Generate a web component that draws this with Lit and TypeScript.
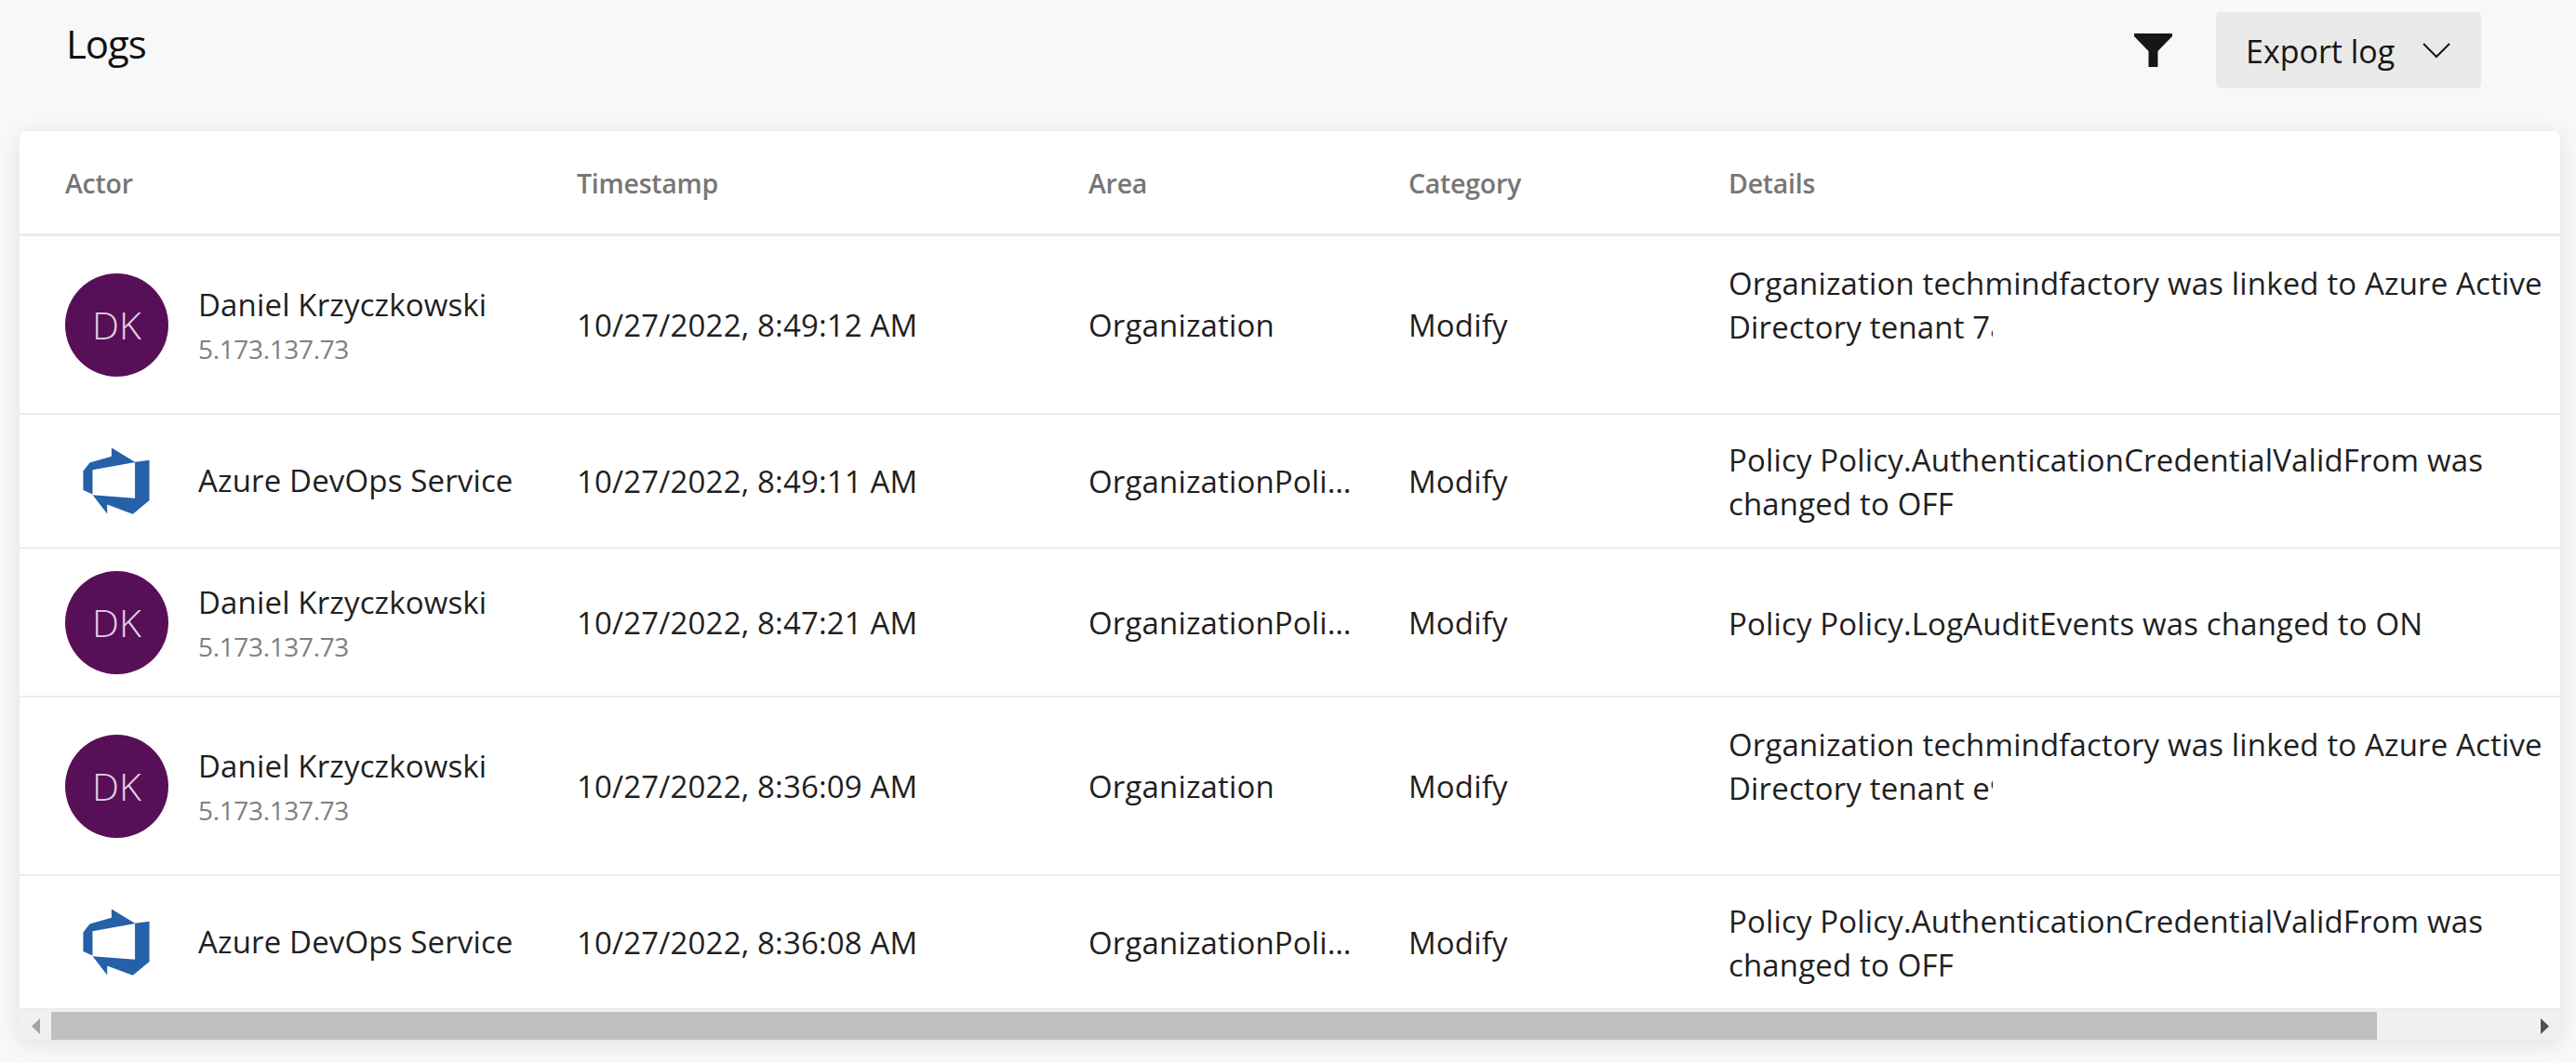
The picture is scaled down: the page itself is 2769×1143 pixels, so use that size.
import { LitElement, html, css, svg } from "lit";
import { customElement } from "lit/decorators.js";

interface Row {
  kind: "user" | "service";
  time: string;
  area: string;
  size: "tall" | "short" | "mid";
  details: string[];
  clipped?: string;
}
const rows: Row[] = [
  { kind: "user", time: "10/27/2022, 8:49:12 AM", area: "Organization", size: "tall",
    details: ["Organization techmindfactory was linked to Azure Active"], clipped: "Directory tenant 7a0b5d3c" },
  { kind: "service", time: "10/27/2022, 8:49:11 AM", area: "OrganizationPolicy", size: "short",
    details: ["Policy Policy.AuthenticationCredentialValidFrom was", "changed to OFF"] },
  { kind: "user", time: "10/27/2022, 8:47:21 AM", area: "OrganizationPolicy", size: "mid",
    details: ["Policy Policy.LogAuditEvents was changed to ON"] },
  { kind: "user", time: "10/27/2022, 8:36:09 AM", area: "Organization", size: "tall",
    details: ["Organization techmindfactory was linked to Azure Active"], clipped: "Directory tenant e9f41b7d" },
  { kind: "service", time: "10/27/2022, 8:36:08 AM", area: "OrganizationPolicy", size: "short",
    details: ["Policy Policy.AuthenticationCredentialValidFrom was", "changed to OFF"] },
];

const devops = svg`<path fill="#2560a8" d="M17 4v9.74l-4 3.28-6.2-2.26V17l-3.51-4.59 10.23.8V4.44zm-3.41.49L7.85 1v2.07L2.58 4.62 1 6.65v4.61l2.26 1V6.34z"/>`;

@customElement("app-root")
export class AppRoot extends LitElement {
  static styles = css`
    :host {
      display: block;
      height: 1143px;
      background: #f8f8f8;
      font-family: "Open Sans", "Noto Sans", sans-serif;
      color: #1f1f1f;
      overflow: hidden;
    }
    .top {
      display: flex;
      align-items: flex-start;
      height: 141px;
      padding: 13px 102px 0 71px;
      box-sizing: border-box;
    }
    .title {
      font-size: 42px;
      line-height: 68px;
      letter-spacing: -1.1px;
      color: #111;
      margin-top: 0;
    }
    .spacer { flex: 1; }
    .filter {
      width: 41px;
      height: 36px;
      margin: 23px 47px 0 0;
      display: block;
    }
    .export {
      display: flex;
      align-items: center;
      width: 285px;
      height: 82px;
      box-sizing: border-box;
      padding: 0 33px 0 32px;
      background: #e9e9e9;
      border-radius: 5px;
      font-size: 34px;
      font-weight: 500;
      letter-spacing: 0;
      color: #161616;
      justify-content: space-between;
    }
    .export span { padding-top: 2px; }
    .export svg { width: 30px; height: 18px; display: block; }
    .card {
      margin: 0 17px 0 21px;
      background: #fff;
      border-radius: 8px;
      box-shadow: 0 4px 22px rgba(0, 0, 0, 0.1);
      overflow: hidden;
      height: 977px;
      display: flex;
      flex-direction: column;
    }
    .row {
      display: grid;
      grid-template-columns: 550px 550px 344px 344px 960px;
      padding-left: 49px;
      align-items: center;
      box-sizing: border-box;
      border-bottom: 2px solid #ececec;
      font-size: 33px;
      letter-spacing: 0.15px;
      flex: none;
    }
    .row:last-of-type { border-bottom: none; }
    .head {
      height: 113px;
      border-bottom: 3px solid #eaeaea;
      font-size: 28.500px;
      font-weight: 600;
      letter-spacing: -0.25px;
      color: #767676;
      padding-top: 2px;
    }
    .tall { height: 192px; }
    .short { height: 144px; }
    .mid { height: 160px; }
    .actor { display: flex; align-items: center; gap: 33px; }
    .avatar {
      width: 111px;
      height: 111px;
      margin-right: -1px;
      border-radius: 50%;
      background: #570f57;
      color: #e3d3e3;
      font-size: 41px;
      font-weight: 300;
      letter-spacing: 0;
      display: flex;
      align-items: center;
      justify-content: center;
      flex: none;
    }
    .logo { width: 110px; height: 110px; display: flex; align-items: center; justify-content: center; flex: none; }
    .logo svg { width: 80px; height: 80px; display: block; }
    .who { display: flex; flex-direction: column; }
    .name { line-height: 47px; white-space: nowrap; margin-top: 2.500px; }
    .name:only-child { margin-top: -1px; }
    .ip { font-size: 28px; line-height: 44px; letter-spacing: -0.35px; color: #808080; margin-top: 1.500px; }
    .cell { padding-top: 1px; }
    .area {
      overflow: hidden;
      text-overflow: ellipsis;
      white-space: nowrap;
      min-width: 0;
      padding-top: 1px;
      padding-right: 60px;
    }
    .details { line-height: 47px; padding-top: 2px; }
    .line { white-space: nowrap; }
    .clip { white-space: nowrap; overflow: hidden; width: 284px; margin-bottom: 44px; }
    .scroll {
      flex: none;
      height: 34px;
      background: #f0f0f0;
      display: flex;
      align-items: center;
      margin-top: auto;
    }
    .arrow { width: 34px; flex: none; display: flex; justify-content: center; }
    .arrow svg { width: 9px; height: 17px; display: block; }
    .thumb { width: 2500px; height: 30px; background: #c0c0c0; flex: none; }
    .gap { flex: 1; }
  `;

  private actor(r: Row) {
    if (r.kind === "service") {
      return html`<div class="actor">
        <div class="logo"><svg viewBox="0 0 18 18">${devops}</svg></div>
        <div class="who"><div class="name">Azure DevOps Service</div></div>
      </div>`;
    }
    return html`<div class="actor">
      <div class="avatar">DK</div>
      <div class="who">
        <div class="name">Daniel Krzyczkowski</div>
        <div class="ip">5.173.137.73</div>
      </div>
    </div>`;
  }

  render() {
    return html`
      <div class="top">
        <div class="title">Logs</div>
        <div class="spacer"></div>
        <svg class="filter" viewBox="0 0 41 36"><path fill="#161616" d="M0 0h41v3L25.500 19v17h-10V19L0 3z"/></svg>
        <div class="export">
          <span>Export log</span>
          <svg viewBox="0 0 30 18"><path fill="none" stroke="#161616" stroke-width="2" d="M1 2l14 14L29 2"/></svg>
        </div>
      </div>
      <div class="card">
        <div class="row head">
          <div>Actor</div><div>Timestamp</div><div>Area</div><div>Category</div><div>Details</div>
        </div>
        ${rows.map(
          (r) => html`<div class="row ${r.size}">
            ${this.actor(r)}
            <div class="cell">${r.time}</div>
            <div class="area">${r.area}</div>
            <div class="cell">Modify</div>
            <div class="details">
              ${r.details.map((d) => html`<div class="line">${d}</div>`)}
              ${r.clipped ? html`<div class="clip">${r.clipped}</div>` : ""}
            </div>
          </div>`
        )}
        <div class="scroll">
          <div class="arrow"><svg viewBox="0 0 9 17"><path fill="#a3a3a3" d="M9 0v17L0 8.500z"/></svg></div>
          <div class="thumb"></div>
          <div class="gap"></div>
          <div class="arrow"><svg viewBox="0 0 9 17"><path fill="#505050" d="M0 0v17l9-8.500z"/></svg></div>
        </div>
      </div>
    `;
  }
}
